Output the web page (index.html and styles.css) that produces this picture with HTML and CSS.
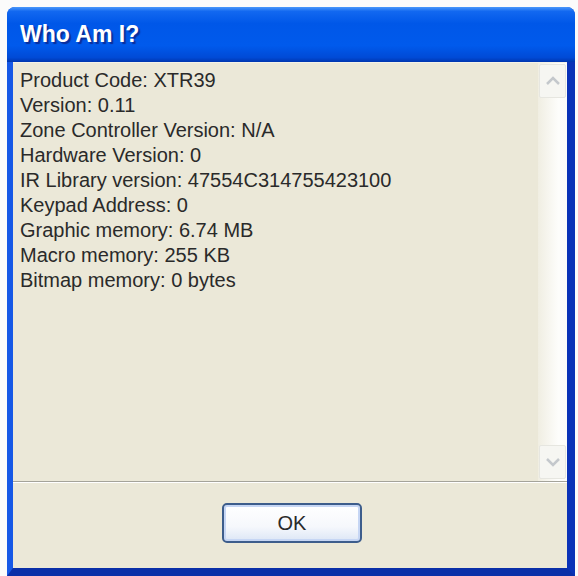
FILE: index.html
```html
<!DOCTYPE html>
<html lang="en">
<head>
  <meta charset="UTF-8">
  <title>Who Am I?</title>
  <link rel="stylesheet" href="styles.css">
</head>
<body>
  <div class="window">
    <div class="titlebar">Who Am I?</div>

    <div class="frame">
      <div class="info">
        <div class="lines">
          <div>Product Code: XTR39</div>
          <div>Version: 0.11</div>
          <div>Zone Controller Version: N/A</div>
          <div>Hardware Version: 0</div>
          <div>IR Library version: 47554C314755423100</div>
          <div>Keypad Address: 0</div>
          <div>Graphic memory: 6.74 MB</div>
          <div>Macro memory: 255 KB</div>
          <div>Bitmap memory: 0 bytes</div>
        </div>

        <div class="scrollbar">
          <div class="arrow">
            <svg width="16" height="10" viewBox="0 0 16 10"><path d="M2 8 L8 2 L14 8" fill="none" stroke="#c4c8cc" stroke-width="2.5"/></svg>
          </div>
          <div class="track"></div>
          <div class="arrow">
            <svg width="16" height="10" viewBox="0 0 16 10"><path d="M2 2 L8 8 L14 2" fill="none" stroke="#c4c8cc" stroke-width="2.5"/></svg>
          </div>
        </div>
      </div>

      <div class="footer">
        <button class="ok-btn">OK</button>
      </div>
    </div>
  </div>
</body>
</html>
```

FILE: styles.css
```css
body {
  margin: 0;
  padding: 0;
  background: #fbfbfb;
  font-family: 'Liberation Sans', Arial, sans-serif;
  color: #2a2a2a;
}

.window {
  margin: 7px 0 0 7px;
  width: 568px;
  height: 569px;
  display: flex;
  flex-direction: column;
  border-radius: 8px 8px 0 0;
  background: #0a4fdc;
  overflow: hidden;
}

.titlebar {
  height: 55px;
  flex-shrink: 0;
  display: flex;
  align-items: center;
  padding-left: 13px;
  padding-bottom: 1px;
  box-sizing: border-box;
  color: #fff;
  font-size: 23px;
  font-weight: bold;
  text-shadow: 2px 2px 1px #0a2e9a;
  background: linear-gradient(180deg, #4a97fa 0%, #1268f0 8%, #0057e8 30%, #005aec 70%, #004ad6 92%, #0036ae 100%);
}

.frame {
  flex: 1;
  display: flex;
  flex-direction: column;
  background: #ebe8d8;
  border-left: 6px solid #1658e6;
  border-right: 8px solid #0a32b8;
  border-bottom: 8px solid #0a2fa8;
}

.info {
  flex: 1;
  display: flex;
  border-top: 1px solid #f4f2e8;
  border-bottom: 1px solid #a4a39a;
  box-shadow: 0 1px 0 #fff;
}

.lines {
  flex: 1;
  padding: 5px 0 0 7px;
  font-size: 20px;
  line-height: 25px;
}

.scrollbar {
  width: 29px;
  display: flex;
  flex-direction: column;
  padding: 1px 0 2px;
  background: linear-gradient(90deg, #f0eee2, #fdfdfb 70%, #fcfcfa);
}

.scrollbar .arrow {
  height: 32px;
  margin: 0 1px;
  display: flex;
  align-items: center;
  justify-content: center;
  border: 1px solid #e6e6e0;
  border-radius: 2px;
  background: #f6f6f2;
}

.scrollbar .track {
  flex: 1;
}

.footer {
  height: 82px;
  display: flex;
  justify-content: center;
  align-items: center;
  padding-left: 4px;
  padding-bottom: 4px;
}

.ok-btn {
  width: 140px;
  height: 40px;
  border: 2px solid #3d5d8c;
  border-radius: 5px;
  background: linear-gradient(180deg, #ffffff 0%, #f6f8fc 60%, #dce6f6 100%);
  box-shadow: inset 0 0 0 2px #c6d6f4;
  font-family: 'Liberation Sans', Arial, sans-serif;
  font-size: 20px;
  color: #2a2a2a;
  padding: 0;
}
```
